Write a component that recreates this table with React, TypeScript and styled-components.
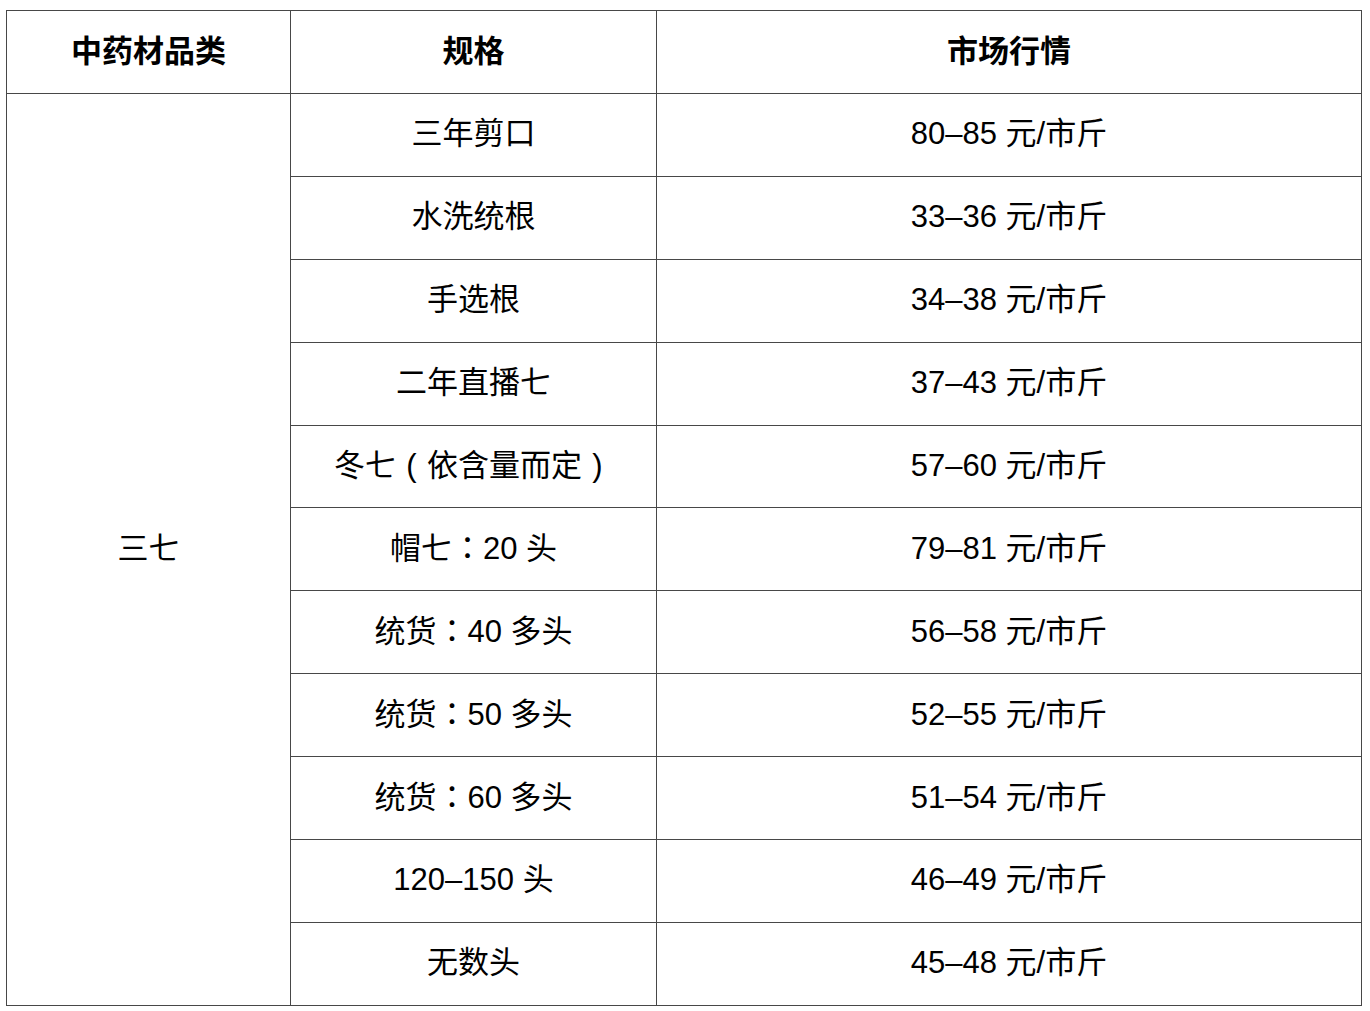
import React from 'react';
import styled, { createGlobalStyle } from 'styled-components';

const GlobalStyle = createGlobalStyle`
  html, body {
    margin: 0;
    padding: 0;
    background: #fff;
  }
  body {
    font-family: "Liberation Sans", "Noto Sans CJK TC", sans-serif;
    color: #000;
  }
`;

const Page = styled.div`
  padding: 10px 0 0 6px;
`;

const Table = styled.table`
  width: 1355px;
  border-collapse: collapse;
  table-layout: fixed;
  border: 1px solid #474747;
`;

const Col = styled.col<{ w: number }>`
  width: ${p => p.w}px;
`;

const HeadCell = styled.th`
  height: 83px;
  padding: 0 0 8px;
  box-sizing: border-box;
  border: 1px solid #474747;
  font-size: 31px;
  font-weight: bold;
  text-align: center;
  vertical-align: middle;
`;

const Cell = styled.td`
  height: 82.9px;
  padding: 0 0 8px;
  box-sizing: border-box;
  border: 1px solid #474747;
  font-size: 31px;
  font-weight: normal;
  text-align: center;
  vertical-align: middle;
`;

// full-width bracket drawn centred in its em box
const Paren = styled.span`
  display: inline-block;
  width: 1em;
  text-align: center;
`;

const rows: [React.ReactNode, string][] = [
  ['三年剪口', '80–85 元/市斤'],
  ['水洗统根', '33–36 元/市斤'],
  ['手选根', '34–38 元/市斤'],
  ['二年直播七', '37–43 元/市斤'],
  [<>冬七<Paren>(</Paren>依含量而定<Paren>)</Paren></>, '57–60 元/市斤'],
  ['帽七：20 头', '79–81 元/市斤'],
  ['统货：40 多头', '56–58 元/市斤'],
  ['统货：50 多头', '52–55 元/市斤'],
  ['统货：60 多头', '51–54 元/市斤'],
  ['120–150 头', '46–49 元/市斤'],
  ['无数头', '45–48 元/市斤'],
];

const App: React.FC = () => (
  <Page>
    <GlobalStyle />
    <Table>
      <colgroup>
        <Col w={284} />
        <Col w={366} />
        <Col w={705} />
      </colgroup>
      <thead>
        <tr>
          <HeadCell>中药材品类</HeadCell>
          <HeadCell>规格</HeadCell>
          <HeadCell>市场行情</HeadCell>
        </tr>
      </thead>
      <tbody>
        {rows.map(([spec, price], i) => (
          <tr key={price}>
            {i === 0 && <Cell rowSpan={rows.length}>三七</Cell>}
            <Cell>{spec}</Cell>
            <Cell>{price}</Cell>
          </tr>
        ))}
      </tbody>
    </Table>
  </Page>
);

export default App;
